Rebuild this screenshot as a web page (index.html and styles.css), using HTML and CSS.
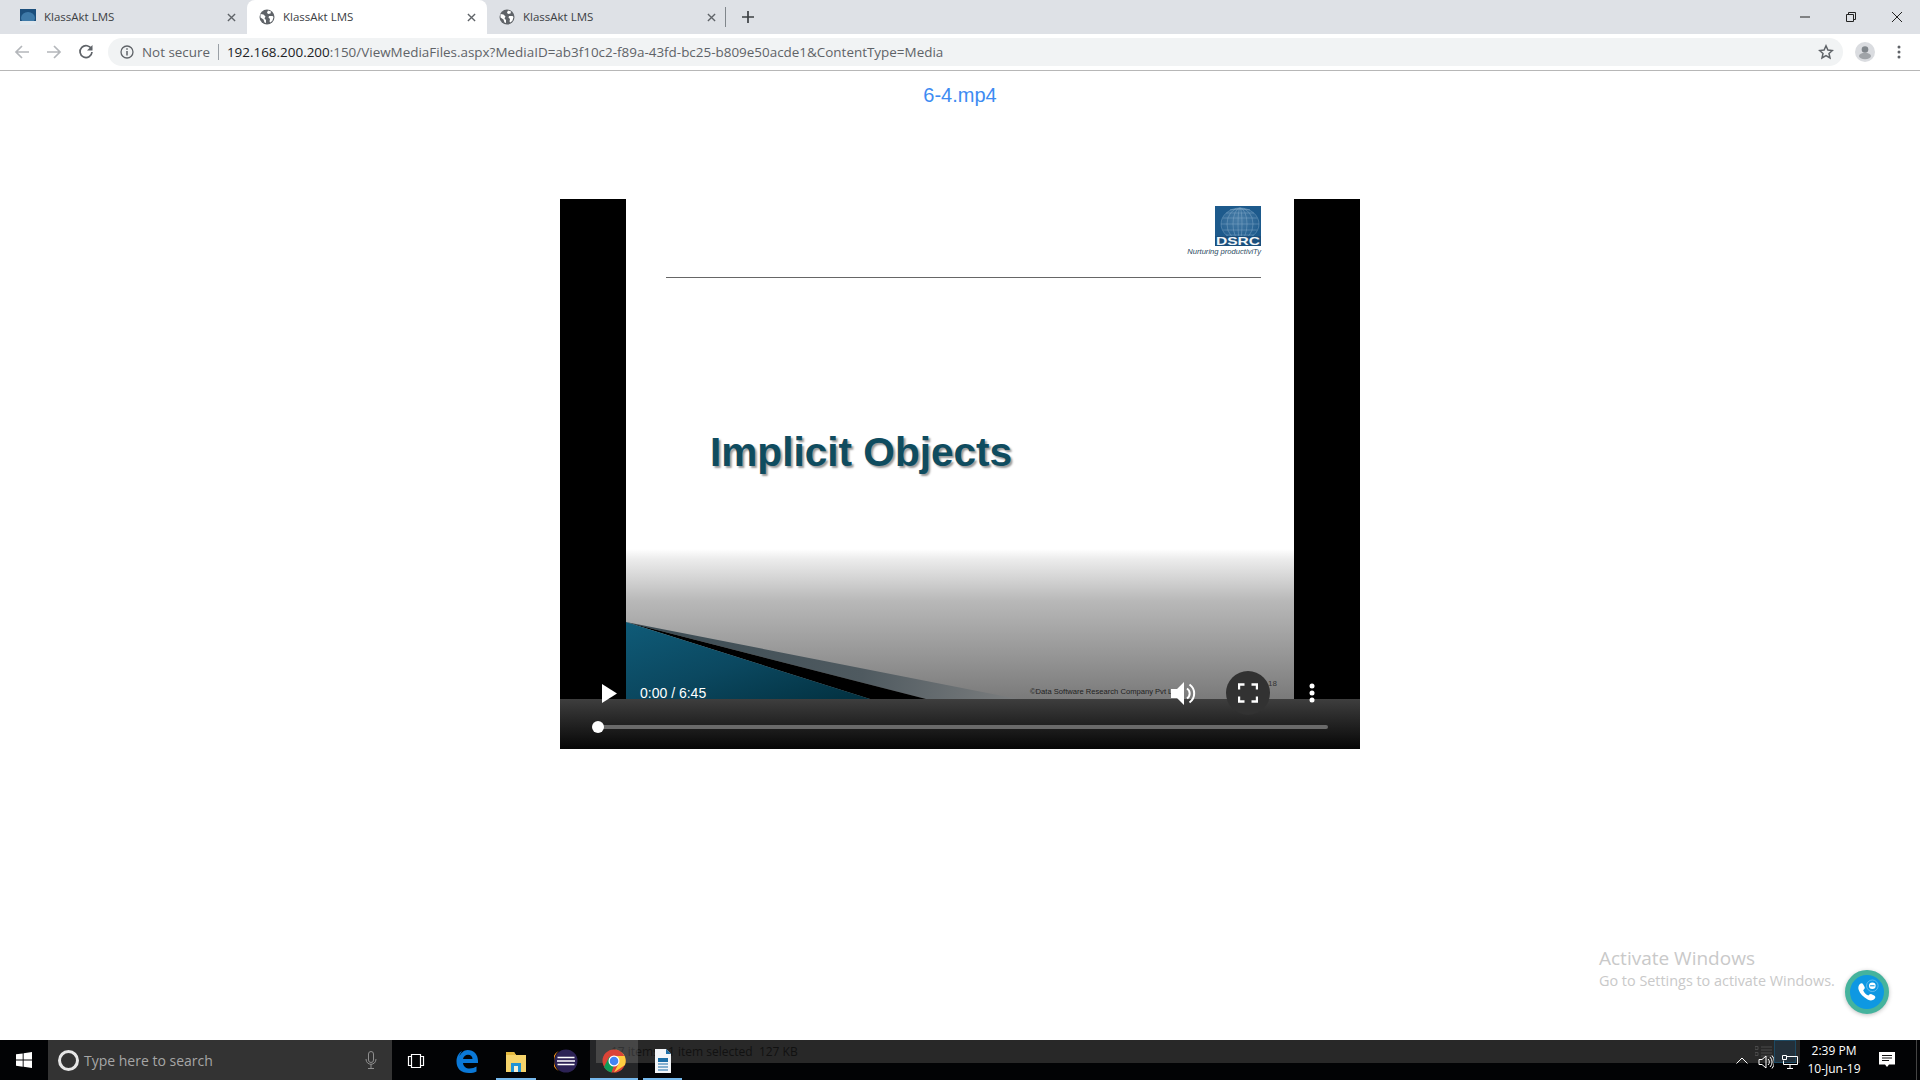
FILE: index.html
```html
<!DOCTYPE html>
<html lang="en">
<head>
<meta charset="utf-8">
<title>KlassAkt LMS</title>
<link rel="stylesheet" href="styles.css">
</head>
<body>
<svg class="defs" width="0" height="0">
  <defs>
    <symbol id="globe" viewBox="0 0 16 16">
      <circle cx="8" cy="8" r="7.5" fill="#5f6368"/>
      <path d="M1.500 5l3 .5 2 2-1 2 1.500 1.500v3l-1.500-.5-1-3-3-2zM9 1.500l3 1-.5 2-2.500.5-1-1.500zM10 7l3.500 0 1 1-1 3.500-2 2-1-1 .5-2.500-1.500-1.500z" fill="#fff"/>
    </symbol>
    <symbol id="close" viewBox="0 0 10 10">
      <path d="M1 1l8 8M9 1l-8 8" stroke="#5f6368" stroke-width="1.500" fill="none"/>
    </symbol>
  </defs>
</svg>

<header class="chrome">
  <div class="tabbar">
    <div class="tab tab-first">
      <svg class="favicon" viewBox="0 0 16 16"><rect width="16" height="16" fill="#1c4f7c"/><ellipse cx="8" cy="9" rx="7" ry="6" fill="#3f7aa8"/><rect y="12" width="16" height="4" fill="#dfe6ec"/></svg>
      <span class="tab-title">KlassAkt LMS</span>
      <svg class="tab-close"><use href="#close"/></svg>
    </div>
    <div class="tab tab-active">
      <svg class="favicon"><use href="#globe"/></svg>
      <span class="tab-title">KlassAkt LMS</span>
      <svg class="tab-close"><use href="#close"/></svg>
    </div>
    <div class="tab">
      <svg class="favicon"><use href="#globe"/></svg>
      <span class="tab-title">KlassAkt LMS</span>
      <svg class="tab-close"><use href="#close"/></svg>
    </div>
    <span class="tab-sep"></span>
    <svg class="new-tab" viewBox="0 0 12 12"><path d="M6 0v12M0 6h12" stroke="#3c4043" stroke-width="1.700"/></svg>
    <div class="window-controls">
      <svg class="win-btn" viewBox="0 0 12 12"><path d="M1 6h10" stroke="#222" stroke-width="1"/></svg>
      <svg class="win-btn" viewBox="0 0 12 12"><path d="M1.500 3.500h7v7h-7zM3.500 3.500v-2h7v7h-2" stroke="#222" stroke-width="1" fill="none"/></svg>
      <svg class="win-btn" viewBox="0 0 12 12"><path d="M1 1l10 10M11 1L1 11" stroke="#222" stroke-width="1"/></svg>
    </div>
  </div>
  <div class="toolbar">
    <svg class="nav-icon" viewBox="0 0 16 16"><path d="M15 8H2M8 2L2 8l6 6" stroke="#b4b7bb" stroke-width="1.700" fill="none"/></svg>
    <svg class="nav-icon" viewBox="0 0 16 16"><path d="M1 8h13M8 2l6 6-6 6" stroke="#b4b7bb" stroke-width="1.700" fill="none"/></svg>
    <svg class="nav-icon" viewBox="0 0 16 16"><path d="M13.500 5.200A6 6 0 1 0 14 8" stroke="#5f6368" stroke-width="1.700" fill="none"/><path d="M14.500 1v5.500H9z" fill="#5f6368"/></svg>
    <div class="omnibox">
      <svg class="info-icon" viewBox="0 0 14 14"><circle cx="7" cy="7" r="6" stroke="#5f6368" stroke-width="1.300" fill="none"/><path d="M7 6v4.500M7 3.300v1.500" stroke="#5f6368" stroke-width="1.500"/></svg>
      <span class="not-secure">Not secure</span>
      <span class="omni-sep"></span>
      <span class="url"><span class="url-host">192.168.200.200</span>:150/ViewMediaFiles.aspx?MediaID=ab3f10c2-f89a-43fd-bc25-b809e50acde1&amp;ContentType=Media</span>
      <svg class="star" viewBox="0 0 16 16"><path d="M8 1.800l1.900 4.200 4.500.5-3.400 3 1 4.500L8 11.700 4 14l1-4.500-3.400-3 4.500-.5z" stroke="#5f6368" stroke-width="1.500" fill="none"/></svg>
    </div>
    <svg class="avatar" viewBox="0 0 20 20"><circle cx="10" cy="10" r="10" fill="#dadce0"/><circle cx="10" cy="7.500" r="3.300" fill="#80868b"/><ellipse cx="10" cy="14" rx="6" ry="3.300" fill="#a0a4a8"/></svg>
    <svg class="menu-dots" viewBox="0 0 4 14"><circle cx="2" cy="2" r="1.500" fill="#5f6368"/><circle cx="2" cy="7" r="1.500" fill="#5f6368"/><circle cx="2" cy="12" r="1.500" fill="#5f6368"/></svg>
  </div>
</header>

<main class="page">
  <h1 class="media-title">6-4.mp4</h1>
  <section class="player">
    <div class="slide">
      <svg class="slide-art" viewBox="0 0 668 550" preserveAspectRatio="none">
        <defs>
          <linearGradient id="fade" x1="0" y1="0" x2="0" y2="1">
            <stop offset="0" stop-color="#fff"/>
            <stop offset="0.05" stop-color="#ececec"/>
            <stop offset="0.26" stop-color="#b8b8b8"/>
            <stop offset="0.75" stop-color="#7a7a7a"/>
            <stop offset="1" stop-color="#606060"/>
          </linearGradient>
          <linearGradient id="teal" x1="0" y1="0" x2="1" y2="1">
            <stop offset="0" stop-color="#0f5b78"/>
            <stop offset="0.5" stop-color="#0b4860"/>
            <stop offset="1" stop-color="#02303f"/>
          </linearGradient>
          <linearGradient id="sheen" x1="0" y1="0" x2="1" y2="0">
            <stop offset="0" stop-color="#3a4a52"/>
            <stop offset="0.6" stop-color="#4f5a60"/>
            <stop offset="1" stop-color="#7c7e7f"/>
          </linearGradient>
        </defs>
        <rect y="350" width="668" height="200" fill="url(#fade)"/>
        <path d="M0 423L392 500H300Z" fill="url(#sheen)"/>
        <path d="M0 423L300 500H244Z" fill="#000"/>
        <path d="M0 423L244 500H0Z" fill="url(#teal)"/>
      </svg>
      <div class="rule"></div>
      <svg class="logo" viewBox="0 0 46 40">
        <defs>
          <radialGradient id="globe-fill" cx="0.45" cy="0.35" r="0.7">
            <stop offset="0" stop-color="#4a7ea8"/>
            <stop offset="1" stop-color="#1d5a8c"/>
          </radialGradient>
        </defs>
        <rect width="46" height="40" fill="#1d5a8c"/>
        <ellipse cx="25" cy="18" rx="19" ry="16" fill="url(#globe-fill)"/>
        <g fill="none" stroke="#8fb3cf" stroke-width=".4">
          <ellipse cx="25" cy="18" rx="19" ry="16"/>
          <ellipse cx="25" cy="18" rx="13" ry="16"/>
          <ellipse cx="25" cy="18" rx="7" ry="16"/>
          <ellipse cx="25" cy="18" rx="2" ry="16"/>
          <path d="M6 18h38M8 12h34M11 7h28M15 3.500h20M8 24h34M11 29h28"/>
        </g>
        <rect y="30" width="46" height="10" fill="#1a4f7d"/>
        <text class="logo-text" x="1" y="39.200" textLength="44" lengthAdjust="spacingAndGlyphs">DSRC</text>
      </svg>
      <span class="tagline">Nurturing productiviTy</span>
      <h2 class="slide-title">Implicit Objects</h2>
      <span class="copyright">©Data Software Research Company Pvt Ltd</span>
      <span class="year">18</span>
    </div>
    <div class="controls">
      <div class="control-row">
        <svg class="play" viewBox="0 0 15 19"><path d="M0 0l15 9.500L0 19z" fill="#fff"/></svg>
        <span class="time">0:00 / 6:45</span>
        <svg class="volume" viewBox="0 0 25 23"><path d="M0 7h6l7-7v23l-7-7H0z" fill="#fff"/><path d="M16 6.500a6 6 0 0 1 0 10M18.500 2.500a11 11 0 0 1 0 18" stroke="#fff" stroke-width="2" fill="none"/></svg>
        <span class="fullscreen"><svg viewBox="0 0 20 20"><path d="M1 6.500V1.500h5.500M13.500 1.500h5.500v5M19 13.500v5h-5.500M6.500 18.500H1v-5" stroke="#fff" stroke-width="2.400" fill="none"/></svg></span>
        <svg class="kebab" viewBox="0 0 6 20"><circle cx="3" cy="3" r="2.500" fill="#fff"/><circle cx="3" cy="10" r="2.500" fill="#fff"/><circle cx="3" cy="17" r="2.500" fill="#fff"/></svg>
      </div>
      <div class="track"><span class="thumb"></span></div>
    </div>
  </section>

  <div class="activation">
    <div class="activation-title">Activate Windows</div>
    <div class="activation-sub">Go to Settings to activate Windows.</div>
  </div>
  <div class="call-button">
    <svg viewBox="0 0 36 36">
      <path d="M10 9c1.500-1.500 3-1 3.800.5l1.500 3c.4 1 .2 1.700-.6 2.400l-1 1c1 2.600 3.200 4.900 5.900 6l1-1c.8-.8 1.600-1 2.500-.5l3 1.600c1.400.8 1.800 2.300.5 3.600-2 2-4.600 2.400-7.400 1-5.600-2.600-9-6.500-10.600-11-.8-2.600-.3-4.900 1.400-6.600z" fill="#fff"/>
      <circle cx="24" cy="11" r="6.500" fill="none" stroke="#8ccdf2" stroke-width=".7"/>
      <circle cx="24" cy="11" r="3.700" fill="#fff"/>
      <path d="M21.500 11h5" stroke="#0e98e2" stroke-width="1.200"/>
    </svg>
  </div>
</main>

<footer class="taskbar">
  <svg class="start" viewBox="0 0 16 16"><path d="M0 2.300l6.700-.9v6.200H0zM7.600 1.300L16 0v7.600H7.600zM0 8.500h6.700v6.200L0 13.700zM7.600 8.500H16V16l-8.400-1.200z" fill="#fff"/></svg>
  <div class="search">
    <span class="cortana"></span>
    <span class="search-text">Type here to search</span>
    <svg class="mic" viewBox="0 0 12 18"><rect x="3.500" y=".5" width="5" height="11" rx="2.500" stroke="#8f8f8f" fill="none"/><path d="M1 8c0 7 10 7 10 0M6 13v4M3 17.500h6" stroke="#8f8f8f" fill="none"/></svg>
  </div>
  <div class="status-strip">
    <span class="status-text">17 items &nbsp; 1 item selected &nbsp;127 KB</span>
    <svg class="view-list" viewBox="0 0 17 12"><path d="M0 1.500h3v3H0zM0 7.500h3v3H0zM6 2h11M6 5h11M6 8h11M6 11h11" stroke="#4a4a4a" fill="none"/></svg>
    <span class="view-box"></span>
  </div>
  <div class="apps">
    <span class="app app-view"><svg class="app-icon" viewBox="0 0 20 20"><path d="M5.500 3.500h9v13h-9zM5.500 5.500h-3v9h3M14.500 5.500h3v9h-3" stroke="#fff" stroke-width="1.200" fill="none"/></svg></span>
    <span class="app app-edge"><svg class="app-icon-lg" viewBox="0 0 24 24"><path d="M12.500 1C19 1 23 5.500 23 12v2H8c.3 3.500 3 5.500 6.500 5.500 2.800 0 5-.7 7-2v5c-2 1-4.500 1.500-7.500 1.500C6 24 1.500 19.500 1.500 12.500c0-4.500 2-8.500 5.500-10.500-1.500 2-2.200 3.500-2.500 5 1.500-3 4.500-6 8-6zM8 10h9.500c0-2.500-1.700-4.300-4.500-4.300-2.500 0-4.500 1.800-5 4.300z" fill="#0a78d7"/></svg></span>
    <span class="app app-open app-files"><svg class="app-icon-lg" viewBox="0 0 24 24"><path d="M2 3h8l2 3h10v17H2z" fill="#f5d36b"/><path d="M2 3h8l2 3H2z" fill="#e4b93f"/><path d="M7 14h10v9H7z" fill="#1f93d6"/><path d="M10 17h4v6h-4z" fill="#f5f0d8"/></svg></span>
    <span class="app app-eclipse"><svg class="app-icon-lg" viewBox="0 0 24 24"><circle cx="12" cy="12" r="11.500" fill="#2c2255"/><path d="M5 1.800A11.500 11.500 0 0 0 5 22.200 13 13 0 0 1 5 1.800z" fill="#f7941e"/><path d="M3.500 8.500h17M3 12h18M3.500 15.500h17" stroke="#fff" stroke-width="1.600"/></svg></span>
    <span class="app app-open app-chrome"><svg class="app-icon-lg" viewBox="0 0 24 24"><circle cx="12" cy="12" r="11.500" fill="#db4437"/><path d="M2 18L7.500 7.500 12 16l-2.500 7.500A11.500 11.500 0 0 1 2 18z" fill="#0f9d58"/><path d="M12 .5h0A11.500 11.500 0 0 1 23 16l-11 7.500L17 14l-5-7h10.300A11.500 11.500 0 0 0 12 .5z" fill="#ffcd40"/><circle cx="12" cy="12" r="5.500" fill="#fff"/><circle cx="12" cy="12" r="4.300" fill="#4285f4"/></svg></span>
    <span class="app app-open app-writer"><svg class="app-icon-lg" viewBox="0 0 24 24"><path d="M4 0h11l5 5v19H4z" fill="#f2f5f8"/><path d="M15 0l5 5h-5z" fill="#1b6fa8"/><path d="M7 9h10v4H7z" fill="#1b6fa8"/><path d="M7 15h10M7 18h10M7 21h10" stroke="#1b6fa8" stroke-width="1.200"/></svg></span>
  </div>
  <div class="tray">
    <svg class="tray-icon tray-chevron" viewBox="0 0 12 7"><path d="M.5 6.500L6 1l5.500 5.500" stroke="#fff" fill="none"/></svg>
    <svg class="tray-icon" viewBox="0 0 16 16"><path d="M1 5.500h3L8 2v12L4 10.500H1z" stroke="#fff" fill="none"/><path d="M10 5a4 4 0 0 1 0 6M12 3a7 7 0 0 1 0 10M14 1.500a10 10 0 0 1 0 13" stroke="#fff" fill="none"/></svg>
    <svg class="tray-icon" viewBox="0 0 16 16"><path d="M4 2.500h11.500v8H1.500v-4M8 11v3M5 14.500h6M.5 1.500h4v4h-4z" stroke="#fff" fill="none"/></svg>
    <div class="clock"><div>2:39 PM</div><div>10-Jun-19</div></div>
    <svg class="notify" viewBox="0 0 16 16"><path d="M0 0h16v12.500H10L8 15l-2-2.500H0z" fill="#fff"/><path d="M3 3.500h10M3 6h10M3 8.500h7" stroke="#111" stroke-width="1"/></svg>
    <span class="show-desktop"></span>
  </div>
</footer>
</body>
</html>
```
FILE: styles.css
```css
* { box-sizing: border-box; }
html, body { margin: 0; height: 100%; }
body {
  display: flex;
  flex-direction: column;
  height: 100vh;
  overflow: hidden;
  background: #fff;
  font-family: "Liberation Sans", Arial, sans-serif;
}
.defs { position: absolute; }

/* Browser chrome */
.chrome { flex: none; }
.tabbar {
  display: flex;
  align-items: center;
  height: 34px;
  background: #dee1e6;
}
.tab {
  display: flex;
  align-items: center;
  width: 240px;
  height: 34px;
  padding: 0 11px 0 12px;
  border-radius: 8px 8px 0 0;
}
.tab-first { width: 247px; padding-left: 20px; padding-right: 11px; }
.tab-active { background: #fff; }
.favicon { flex: none; width: 16px; height: 16px; }
.tab-title {
  flex: 1;
  margin: -2px 0 0 8px;
  font: 11.5px "Open Sans", sans-serif;
  color: #3c4043;
  white-space: nowrap;
}
.tab-close { flex: none; width: 9px; height: 9px; }
.tab-sep { width: 1px; height: 20px; margin-left: -2px; background: #80868b; }
.new-tab { width: 12px; height: 12px; margin-left: 16px; }
.window-controls { display: flex; gap: 34px; margin-left: auto; margin-right: 17px; }
.win-btn { width: 12px; height: 12px; }

.toolbar {
  display: flex;
  align-items: center;
  height: 37px;
  padding: 0 0 1px 14px;
  border-bottom: 1px solid #b7b7b7;
  background: #fff;
}
.nav-icon { flex: none; width: 16px; height: 16px; margin-right: 16px; }
.omnibox {
  flex: none;
  display: flex;
  align-items: center;
  width: 1735px;
  height: 28px;
  margin-left: -2px;
  padding: 0 9px 0 12px;
  border-radius: 14px;
  background: #f1f3f4;
  font: 13px "Open Sans", sans-serif;
  color: #5f6368;
  white-space: nowrap;
}
.info-icon { flex: none; width: 14px; height: 14px; }
.not-secure { margin: 0 0 0 8px; font-size: 13.4px; }
.omni-sep { width: 1px; height: 16px; margin: 0 8px 0 8px; background: #9aa0a6; }
.url { flex: 1; font-size: 13.44px; }
.url-host { color: #202124; }
.star { flex: none; width: 16px; height: 16px; }
.avatar { flex: none; width: 20px; height: 20px; margin-left: 12px; }
.menu-dots { flex: none; width: 4px; height: 14px; margin-left: 22px; }

/* Page */
.page { position: relative; flex: 1; min-height: 0; }
.media-title {
  margin: 13px 0 0;
  height: 23px;
  font: 400 20px/23px "Liberation Sans", Arial, sans-serif;
  color: #3d8bf2;
  text-align: center;
}
.player {
  position: relative;
  width: 800px;
  height: 550px;
  margin: 92px auto 0;
  background: #000;
}
.slide {
  position: absolute;
  top: 0;
  bottom: 0;
  left: 66px;
  width: 668px;
  background: #fff;
}
.slide-art { position: absolute; inset: 0; width: 100%; height: 100%; }
.rule { position: absolute; left: 40px; top: 78px; width: 595px; height: 1px; background: #666; }
.logo { position: absolute; left: 589px; top: 7px; width: 46px; height: 40px; }
.logo-text { font: 900 10.500px "Liberation Sans", sans-serif; fill: #f2f5f8; }
.tagline {
  position: absolute;
  right: 33px;
  top: 48px;
  font: italic 7.600px "Liberation Sans", sans-serif;
  color: #2b4b63;
  white-space: nowrap;
}
.slide-title {
  position: absolute;
  left: 84px;
  top: 230px;
  margin: 0;
  font: 700 40.600px/46px "Liberation Sans", Arial, sans-serif;
  color: #0f4c5f;
  text-shadow: 2px 2px 2px #9a9a9a;
  white-space: nowrap;
}
.copyright {
  position: absolute;
  left: 404px;
  top: 488px;
  font: 7.600px "Liberation Sans", sans-serif;
  color: #222;
  white-space: nowrap;
}
.year { position: absolute; left: 642px; top: 480px; font: 8px "Liberation Sans", sans-serif; color: #333; }

.controls {
  position: absolute;
  left: 0;
  right: 0;
  bottom: 0;
  height: 50px;
  background: linear-gradient(#3e3e3e, #060606);
}
.control-row {
  position: absolute;
  left: 0;
  right: 0;
  top: -28px;
  height: 44px;
  display: flex;
  align-items: center;
}
.play { flex: none; width: 15px; height: 19px; margin-left: 42px; }
.time { margin-left: 23px; font-size: 14px; color: #fff; white-space: nowrap; }
.volume { flex: none; width: 25px; height: 23px; margin-left: 465px; }
.fullscreen {
  flex: none;
  display: flex;
  align-items: center;
  justify-content: center;
  width: 44px;
  height: 44px;
  margin-left: 30px;
  border-radius: 50%;
  background: #323232;
}
.fullscreen svg { width: 20px; height: 20px; }
.kebab { flex: none; width: 6px; height: 20px; margin-left: 39px; }
.track {
  position: absolute;
  left: 38px;
  right: 32px;
  top: 26px;
  height: 4px;
  border-radius: 2px;
  background: #6a6a6a;
}
.thumb {
  position: absolute;
  left: -6px;
  top: -4px;
  width: 12px;
  height: 12px;
  border-radius: 50%;
  background: #fff;
}

.activation { position: absolute; left: 1599px; top: 875px; color: #c9c9c9; font-family: "Open Sans", sans-serif; white-space: nowrap; }
.activation-title { font-size: 19px; line-height: 25px; }
.activation-sub { font-size: 14.400px; line-height: 20px; }
.call-button {
  position: absolute;
  left: 1845px;
  top: 899px;
  display: flex;
  align-items: center;
  justify-content: center;
  width: 44px;
  height: 44px;
  border-radius: 50%;
  border: 5px solid #45b39d;
  background: #0e98e2;
  box-shadow: 0 1px 4px rgba(0,0,0,.25);
}
.call-button svg { width: 32px; height: 32px; }

/* Taskbar */
.taskbar {
  position: relative;
  flex: none;
  display: flex;
  align-items: stretch;
  height: 40px;
  background: #020305;
  color: #fff;
}
.start { flex: none; width: 16px; height: 16px; margin: 12px 16px 0 16px; }
.search {
  flex: none;
  display: flex;
  align-items: center;
  width: 344px;
  padding: 0 15px 0 10px;
  background: #333;
}
.cortana { flex: none; width: 21px; height: 21px; border: 3px solid #e6e6e6; border-radius: 50%; }
.search-text { flex: 1; margin-left: 5px; font: 14px "Open Sans", sans-serif; color: #a6a6a6; }
.mic { flex: none; width: 12px; height: 18px; }
.apps { position: relative; z-index: 1; display: flex; }
.app {
  display: flex;
  align-items: center;
  justify-content: center;
  height: 40px;
  padding-top: 1px;
}
.app-open { box-shadow: inset 0 -2px 0 #76b9ed; }
.app-view { width: 48px; }
.app-edge { width: 54px; }
.app-files { width: 40px; margin: 0 5px 0 2px; }
.app-eclipse { width: 49px; }
.app-chrome { width: 48px; background: rgba(255,255,255,.14); }
.app-writer { width: 39px; margin-left: 5px; }
.app-icon { width: 20px; height: 20px; }
.app-icon-lg { width: 24px; height: 24px; }
.status-strip {
  position: absolute;
  left: 596px;
  right: 120px;
  top: 0;
  height: 23px;
  background: #282828;
}
.status-text {
  position: absolute;
  left: 15px;
  top: 3px;
  font: 12px "Open Sans", sans-serif;
  color: #111;
  white-space: nowrap;
}
.view-list { position: absolute; right: 28px; top: 5px; width: 17px; height: 12px; }
.view-box { position: absolute; right: 4px; top: 0; width: 22px; height: 23px; border: 1px solid #1d4a63; background: #23303a; }
.tray {
  position: relative;
  z-index: 1;
  display: flex;
  align-items: center;
  gap: 8px;
  margin-left: auto;
  padding-right: 3px;
}
.tray-icon { flex: none; width: 16px; height: 16px; margin-top: 3px; }
.tray-chevron { width: 12px; height: 7px; margin: 0 2px 0 0; }
.clock { width: 72px; margin-left: -8px; font: 12px/18px "Open Sans", sans-serif; text-align: center; }
.notify { flex: none; width: 16px; height: 16px; margin: 0 13px 0 1px; }
.show-desktop { width: 1px; height: 40px; background: #444; }
```
